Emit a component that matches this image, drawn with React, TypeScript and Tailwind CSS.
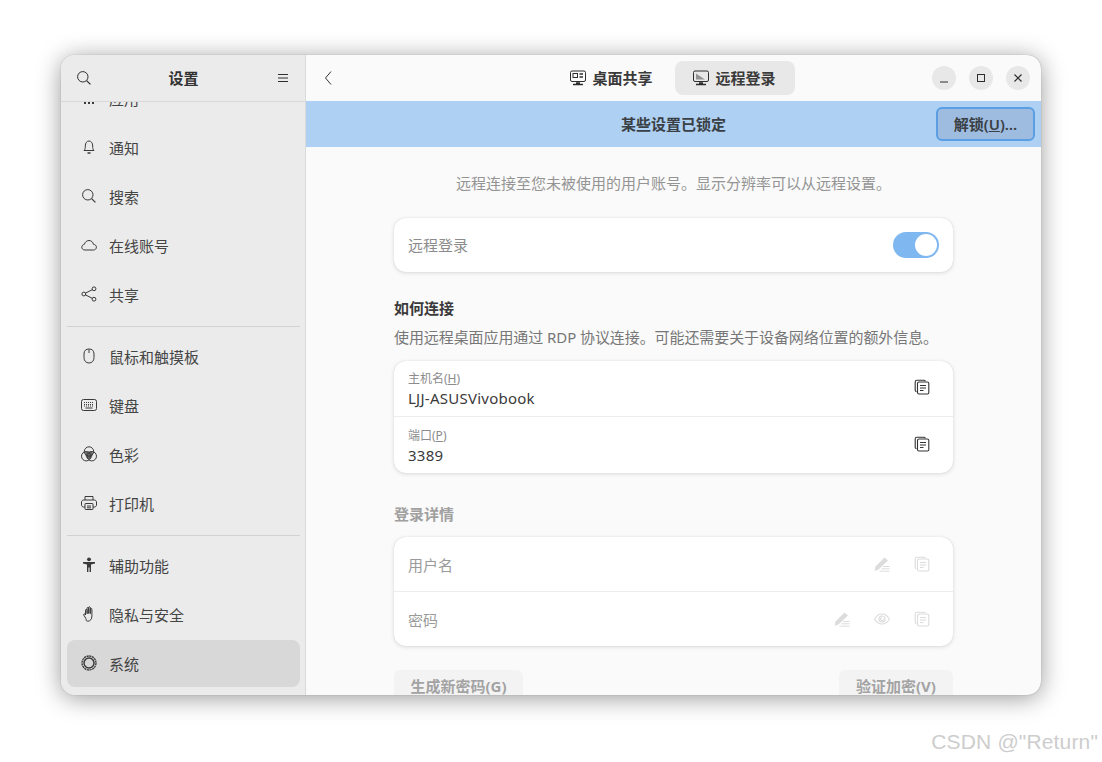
import type { ReactNode } from 'react'

function Ico({ children, className = 'w-4 h-4' }: { children: ReactNode; className?: string }) {
    return (
        <svg viewBox="0 0 16 16" fill="none" stroke="currentColor" strokeWidth="1" className={className}>
            {children}
        </svg>
    )
}

const SearchIcon = () => (
    <Ico>
        <circle cx="6.800" cy="6.800" r="5.200" />
        <path d="M10.600 10.600l3.800 3.800" strokeWidth="1.300" />
    </Ico>
)

const sidebarIcons: Record<string, ReactNode> = {
    apps: (
        <svg viewBox="0 0 16 16" fill="currentColor" className="w-4 h-4">
            <rect x="3" y="2" width="2" height="2" />
            <rect x="7" y="2" width="2" height="2" />
            <rect x="11" y="2" width="2" height="2" />
            <rect x="3" y="7" width="2" height="2" />
            <rect x="7" y="7" width="2" height="2" />
            <rect x="11" y="7" width="2" height="2" />
            <rect x="3" y="12" width="2" height="2" />
            <rect x="7" y="12" width="2" height="2" />
            <rect x="11" y="12" width="2" height="2" />
        </svg>
    ),
    bell: (
        <Ico>
            <path d="M3 11.500c1-1 1.300-2 1.300-4.500C4.300 4 5.800 2 8 2s3.700 2 3.700 5c0 2.500.3 3.500 1.300 4.500z" />
            <path d="M6.500 14h3" strokeWidth="1.400" />
        </Ico>
    ),
    search: <SearchIcon />,
    cloud: (
        <Ico>
            <path d="M4 13C2 13 .8 11.700.8 10.200S2 7.500 3.300 7.400C4 5 5.800 3.500 8 3.500c2.400 0 4 1.700 4.400 3.800 1.700.1 3 1.300 3 2.900S14 13 12.500 13z" />
        </Ico>
    ),
    share: (
        <Ico>
            <circle cx="2.800" cy="8" r="1.900" />
            <circle cx="13" cy="2.800" r="1.900" />
            <circle cx="13" cy="13.200" r="1.900" />
            <path d="M4.500 7.100l6.800-3.400M4.500 8.900l6.800 3.400" />
        </Ico>
    ),
    mouse: (
        <Ico>
            <path d="M8 1C5 1 3 2.500 3 6v3.500C3 12.800 5 15 8 15s5-2.200 5-5.500V6c0-3.500-2-5-5-5z" />
            <path d="M8 1.500V5" />
        </Ico>
    ),
    keyboard: (
        <Ico>
            <rect x="0.500" y="2.500" width="15" height="11" rx="2" />
            <path d="M3 5.500h10M3 7.500h10M3 9h10" strokeDasharray="1 1" />
            <path d="M4.500 11h7" />
        </Ico>
    ),
    color: (
        <Ico>
            <circle cx="8" cy="5.500" r="4.700" />
            <circle cx="5.200" cy="10.200" r="4.700" />
            <circle cx="10.800" cy="10.200" r="4.700" />
            <path d="M4 6.500c2.500-1.300 5.500-1.300 8 0-.2 2-.7 4-2 6-1.300.8-2.700.8-4 0-1.300-2-1.800-4-2-6z" fill="currentColor" fillOpacity="0.750" stroke="none" />
        </Ico>
    ),
    printer: (
        <Ico>
            <path d="M4 5V1.500h8V5" />
            <path d="M4 12H2.500c-1 0-2-1-2-2V7c0-1 1-2 2-2h11c1 0 2 1 2 2v3c0 1-1 2-2 2H12" />
            <rect x="4" y="8.500" width="8" height="6" rx="0.500" />
            <path d="M6 11h4M6 12.800h4" />
        </Ico>
    ),
    a11y: (
        <svg viewBox="0 0 16 16" fill="currentColor" className="w-4 h-4">
            <circle cx="8" cy="2.300" r="1.900" />
            <path d="M2 5h12v1.500l-4 1V15H8.600v-4.500H7.400V15H6V7.500l-4-1z" />
        </svg>
    ),
    hand: (
        <Ico>
            <path d="M4.500 9V4.200a.8.800 0 0 1 1.600 0V8m0-.5V2.200a.8.800 0 0 1 1.600 0V7.500m0 0V1.600a.8.800 0 0 1 1.600 0v5.900m0 .3V3.200a.8.800 0 0 1 1.600 0V10c0 3-1.500 5.200-4 5.200S5.700 14 4.700 12.200L2.700 9c-.4-.8.700-1.500 1.300-.8l.5.8" />
        </Ico>
    ),
    gear: (
        <svg viewBox="0 0 16 16" fill="none" stroke="currentColor" className="w-4 h-4">
            <circle cx="8" cy="8" r="5" strokeWidth="1.500" />
            <circle cx="8" cy="8" r="7" strokeWidth="1.300" strokeDasharray="2.200 0.550" />
        </svg>
    ),
}

function SideItem({ icon, label, active = false }: { icon: string; label: string; active?: boolean }) {
    return (
        <div className={`h-[47px] ml-[6px] mr-[5px] rounded-[8px] flex items-center pl-[14px] gap-[12px] ${active ? 'bg-[#d8d8d8] -mt-px pt-[2px]' : ''}`}>
            <span className="w-4 h-4 text-[#3a3a3a] -mt-[4px] flex-none">{sidebarIcons[icon]}</span>
            <span className="text-[15px] text-[#444444]">{label}</span>
        </div>
    )
}

const CopyIcon = ({ faded = false }: { faded?: boolean }) => (
    <svg viewBox="0 0 16 16" fill="none" stroke="currentColor" strokeWidth="1.100" className={`w-4 h-4 ${faded ? 'text-[#dcdcdc]' : 'text-[#333333]'}`}>
        <path d="M2.500 12.800c-.8-.2-1.300-.8-1.300-1.500V3c0-1 .8-1.700 1.700-1.700h7c.7 0 1.200.4 1.500 1" />
        <rect x="3.500" y="3" width="11.300" height="12" rx="1.500" />
        <path d="M6 6.500h6M6 9h6M6 11.500h3.500" />
    </svg>
)

const PenIcon = () => (
    <svg viewBox="0 0 16 16" className="w-4 h-4 text-[#dcdcdc]" fill="currentColor">
        <path d="M.5 15l1-4.500L10.500 1.500l3.500 3-9.500 9z" />
        <path d="M9 10.500h6.500M7.500 12.800h8M5.500 15.200h10" stroke="currentColor" strokeWidth="1" fill="none" />
    </svg>
)

const EyeIcon = () => (
    <svg viewBox="0 0 16 16" className="w-4 h-4 text-[#dcdcdc]" fill="none" stroke="currentColor" strokeWidth="1.100">
        <path d="M.6 8C2.500 4.700 5 3 8 3s5.500 1.700 7.400 5c-1.900 3.300-4.400 5-7.400 5S2.500 11.300.6 8z" />
        <circle cx="8" cy="8" r="3" />
        <path d="M8 6.500a1.500 1.500 0 1 0 1.500 1.500" />
    </svg>
)

const cardClass = 'bg-white rounded-[12px] shadow-[0_0_1px_rgba(0,0,0,0.15),0_1px_4px_rgba(0,0,0,0.13)]'

function WinButton({ children }: { children: ReactNode }) {
    return <div className="w-6 h-6 rounded-full bg-[#e8e8e8] flex items-center justify-center text-[#2e2e2e]">{children}</div>
}

export default function App() {
    return (
        <div
            className="relative w-[1102px] h-[762px] bg-white overflow-hidden pt-[55px] pl-[61px]"
            style={{ fontFamily: '"Noto Sans", "Noto Sans CJK SC", sans-serif' }}
        >
            <div className="w-[980px] h-[640px] rounded-[14px] overflow-hidden flex bg-[#fafafa] shadow-[0_0_1px_rgba(0,0,0,0.4),0_3px_24px_rgba(0,0,0,0.4)]">
                {/* sidebar */}
                <div className="w-[245px] flex-none bg-[#ebebeb] border-r border-[#d9d9d9] flex flex-col">
                    <div className="relative z-10 h-[47px] flex-none flex items-center justify-between pl-[15px] pr-[16px] bg-[#ebebeb] border-b border-[#d8d8d8]">
                        <span className="text-[#2e2e2e]"><SearchIcon /></span>
                        <span className="text-[15px] font-bold text-[#333333] mr-[2px] mt-[1px]">设置</span>
                        <svg viewBox="0 0 12 12" className="w-3 h-3 text-[#2e2e2e]" stroke="currentColor" strokeWidth="1">
                            <path d="M1 2.500h10M1 6h10M1 9.500h10" />
                        </svg>
                    </div>
                    <div className="flex-1 overflow-hidden">
                        <div className="-mt-[26px] flex flex-col gap-[2px]">
                            <SideItem icon="apps" label="应用" />
                            <SideItem icon="bell" label="通知" />
                            <SideItem icon="search" label="搜索" />
                            <SideItem icon="cloud" label="在线账号" />
                            <SideItem icon="share" label="共享" />
                            <div className="h-px bg-[#d2d2d2] ml-[6px] mr-[5px] my-[5px]" />
                            <SideItem icon="mouse" label="鼠标和触摸板" />
                            <SideItem icon="keyboard" label="键盘" />
                            <SideItem icon="color" label="色彩" />
                            <SideItem icon="printer" label="打印机" />
                            <div className="h-px bg-[#d2d2d2] ml-[6px] mr-[5px] my-[5px]" />
                            <SideItem icon="a11y" label="辅助功能" />
                            <SideItem icon="hand" label="隐私与安全" />
                            <SideItem icon="gear" label="系统" active />
                        </div>
                    </div>
                </div>

                {/* main */}
                <div className="flex-1 min-w-0 flex flex-col">
                    <div className="h-[46px] flex-none flex items-center justify-between pl-[18px] pr-[11px]">
                        <svg viewBox="0 0 10 16" className="w-[10px] h-4 text-[#333333]" fill="none" stroke="currentColor" strokeWidth="1">
                            <path d="M7 1.500L1.500 8 7 14.500" />
                        </svg>
                        <div className="flex items-center gap-[3px] ml-[80px]">
                            <div className="h-[34px] w-[120px] flex items-center justify-center gap-[6px] rounded-[8px]">
                                <svg viewBox="0 0 16 16" className="w-4 h-4 text-[#2e2e2e]" fill="none" stroke="currentColor">
                                    <rect x="0.500" y="1" width="15" height="10.500" rx="1.500" />
                                    <rect x="3" y="3.500" width="4.500" height="4" strokeWidth="1" />
                                    <path d="M9.500 4h3.500M9.500 7h3.500" strokeWidth="1.500" />
                                    <path d="M3 14.500h10M6 13h4" strokeWidth="1.300" />
                                </svg>
                                <span className="text-[15px] font-bold text-[#3a3a3a]">桌面共享</span>
                            </div>
                            <div className="h-[34px] w-[120px] bg-[#e8e8e8] flex items-center justify-center gap-[6px] rounded-[8px]">
                                <svg viewBox="0 0 16 16" className="w-4 h-4 text-[#2e2e2e]" fill="none" stroke="currentColor">
                                    <rect x="0.500" y="1" width="15" height="10.500" rx="1.500" />
                                    <path d="M3 3.500l9 6H3z" fill="currentColor" fillOpacity="0.450" stroke="none" />
                                    <path d="M3 14.500h10M6 13h4" strokeWidth="1.300" />
                                </svg>
                                <span className="text-[15px] font-bold text-[#3a3a3a]">远程登录</span>
                            </div>
                        </div>
                        <div className="flex items-center gap-[13px]">
                            <WinButton>
                                <svg viewBox="0 0 10 10" className="w-[10px] h-[10px]" stroke="currentColor"><path d="M1 9h8" /></svg>
                            </WinButton>
                            <WinButton>
                                <svg viewBox="0 0 10 10" className="w-[10px] h-[10px]" fill="none" stroke="currentColor"><rect x="1.500" y="1.500" width="7" height="7" /></svg>
                            </WinButton>
                            <WinButton>
                                <svg viewBox="0 0 10 10" className="w-[10px] h-[10px]" stroke="currentColor" strokeWidth="1.200"><path d="M1.500 1.500l7 7M8.500 1.500l-7 7" /></svg>
                            </WinButton>
                        </div>
                    </div>

                    <div className="h-[46px] flex-none bg-[#aed0f3] flex items-center justify-end pr-[6px] relative">
                        <span className="absolute left-[315px] text-[15px] font-bold text-[#3a3f45]">某些设置已锁定</span>
                        <div className="w-[99px] h-[34px] rounded-[6px] bg-[#9dbce0] border-2 border-[#5a9fe4] flex items-center justify-center text-[15px] font-semibold text-[#3a3f45]">
                            <span>解锁(<span className="underline">U</span>)…</span>
                        </div>
                    </div>

                    <div className="flex-1 overflow-hidden flex flex-col items-center">
                        <div className="w-[559px]">
                            <p className="text-center text-[15px] leading-[20px] text-[#949494] mt-[26px]">远程连接至您未被使用的用户账号。显示分辨率可以从远程设置。</p>

                            <div className={`${cardClass} h-[54px] mt-[25px] flex items-center justify-between pl-[14px] pr-[14px]`}>
                                <span className="text-[15px] text-[#8c8c8c]">远程登录</span>
                                <div className="w-[46px] h-[26px] rounded-full bg-[#7fb7f0] flex items-center justify-end pr-[2px]">
                                    <div className="w-[22px] h-[22px] rounded-full bg-white" />
                                </div>
                            </div>

                            <h3 className="text-[15px] leading-[20px] font-bold text-[#3a3a3a] mt-[26px]">如何连接</h3>
                            <p className="text-[15px] tracking-[-0.08px] leading-[20px] text-[#777777] mt-[9px]">使用远程桌面应用通过 RDP 协议连接。可能还需要关于设备网络位置的额外信息。</p>

                            <div className={`${cardClass} mt-[14px]`}>
                                <div className="h-[56px] flex items-center justify-between pl-[14px] pr-[23px] border-b border-[#ececec]">
                                    <div className="mt-[1px]">
                                        <div className="text-[12px] leading-[16px] text-[#8c8c8c]">主机名(<span className="underline">H</span>)</div>
                                        <div className="text-[15px] tracking-[0.25px] leading-[20px] text-[#3a3a3a] mt-[1px]">LJJ-ASUSVivobook</div>
                                    </div>
                                    <span className="-mt-[3px]"><CopyIcon /></span>
                                </div>
                                <div className="h-[56px] flex items-center justify-between pl-[14px] pr-[23px]">
                                    <div className="mt-[3px]">
                                        <div className="text-[12px] leading-[16px] text-[#8c8c8c]">端口(<span className="underline">P</span>)</div>
                                        <div className="text-[15px] tracking-[0.25px] leading-[20px] text-[#3a3a3a] mt-[1px]">3389</div>
                                    </div>
                                    <span className="-mt-[2px]"><CopyIcon /></span>
                                </div>
                            </div>

                            <h3 className="text-[15px] leading-[20px] font-bold text-[#a0a0a0] mt-[31px]">登录详情</h3>

                            <div className={`${cardClass} mt-[13px]`}>
                                <div className="h-[55px] flex items-center justify-between pl-[14px] pr-[23px] border-b border-[#ececec]">
                                    <span className="text-[15px] text-[#9a9a9a] mt-[2px]">用户名</span>
                                    <div className="flex items-center gap-6">
                                        <PenIcon />
                                        <CopyIcon faded />
                                    </div>
                                </div>
                                <div className="h-[54px] flex items-center justify-between pl-[14px] pr-[23px]">
                                    <span className="text-[15px] text-[#9a9a9a] mt-[2px]">密码</span>
                                    <div className="flex items-center gap-6">
                                        <PenIcon />
                                        <EyeIcon />
                                        <CopyIcon faded />
                                    </div>
                                </div>
                            </div>

                            <div className="flex justify-between mt-[24px]">
                                <div className="h-[34px] w-[129px] rounded-[6px] bg-[#f3f3f3] flex items-center justify-center text-[15px] font-bold text-[#a3a3a3] pb-[2px]">生成新密码(G)</div>
                                <div className="h-[34px] w-[114px] rounded-[6px] bg-[#f3f3f3] flex items-center justify-center text-[15px] font-bold text-[#a3a3a3] pb-[2px]">验证加密(V)</div>
                            </div>
                        </div>
                    </div>
                </div>
            </div>

            <div
                className="absolute right-[4px] top-[728px] text-[21px] tracking-[0.15px] leading-[28px] text-[#cdcdcd]"
                style={{ fontFamily: '"Liberation Sans", sans-serif' }}
            >
                CSDN @"Return"
            </div>
        </div>
    )
}
